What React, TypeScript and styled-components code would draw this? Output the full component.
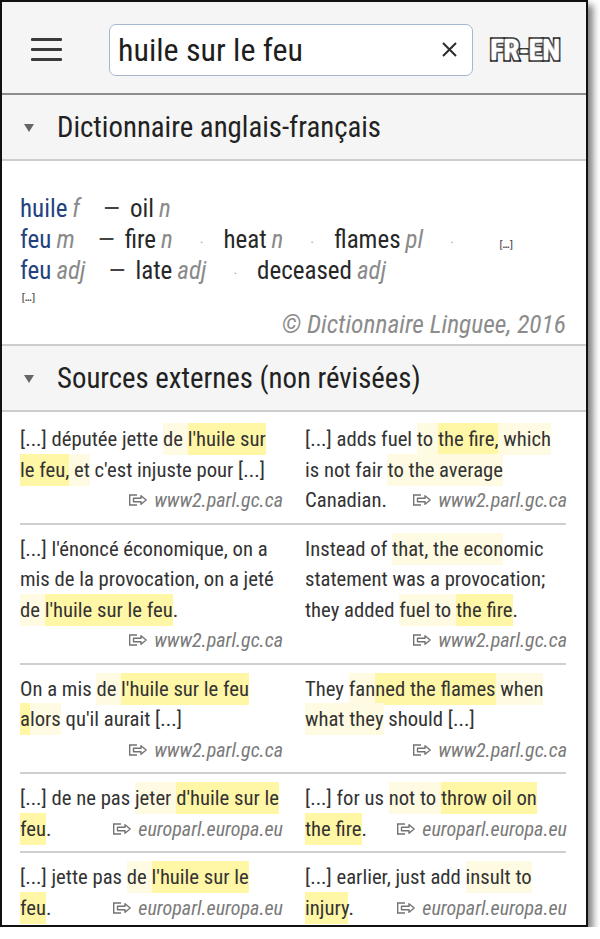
import React from "react";
import styled, { createGlobalStyle } from "styled-components";

const GlobalStyle = createGlobalStyle`
  html, body { margin: 0; padding: 0; background: #fff; }
  body { font-family: "Roboto Condensed", Roboto, "Liberation Sans", sans-serif; color: #333; }
`;

const Frame = styled.div`
  width: 588px;
  height: 927px;
  box-sizing: border-box;
  border: 2px solid #111;
  box-shadow: 5px 5px 7px rgba(0, 0, 0, 0.5);
  overflow: hidden;
  background: #fff;
  display: flex;
  flex-direction: column;
`;

const Header = styled.header`
  height: 91px;
  flex: none;
  background: #f5f5f5;
  border-bottom: 2px solid #8d8d8d;
  box-shadow: 0 1px 2px rgba(0, 0, 0, 0.15);
  display: flex;
  align-items: center;
  padding: 0 0 0 29px;
`;

const Burger = styled.div`
  width: 31px;
  display: flex;
  flex-direction: column;
  gap: 7px;
  margin-right: 47px;
  margin-top: 3px;
  span {
    display: block;
    height: 3px;
    background: #3a3a3a;
    border-radius: 1px;
  }
`;

const SearchBox = styled.div`
  width: 364px;
  height: 52px;
  box-sizing: border-box;
  border: 1.5px solid #a4b8cf;
  border-radius: 7px;
  background: #fff;
  display: flex;
  align-items: center;
  padding: 0 14px 0 8px;
  margin-top: 4px;
`;

const SearchText = styled.span`
  flex: 1;
  font-size: 32px;
  color: #1e1e1e;
  font-family: "Roboto Condensed", Roboto, sans-serif;
`;

const LangLogo = styled.span`
  margin-left: 17px;
  margin-top: 4px;
  font-family: "Roboto Condensed", "Liberation Sans", sans-serif;
  font-weight: 700;
  font-size: 29.5px;
  letter-spacing: -0.8px;
  color: #fff;
  -webkit-text-stroke: 3.5px #111;
  paint-order: stroke fill;
  text-shadow: 0 0 3px #fff;
`;

const SectionHead = styled.div<{ $top?: boolean }>`
  height: 64px;
  flex: none;
  background: #f5f5f5;
  border-bottom: 2px solid #cdcdcd;
  border-top: ${(p) => (p.$top ? "2px solid #cdcdcd" : "none")};
  display: flex;
  align-items: center;
  padding-left: 22px;
  font-size: 28.8px;
  color: #222;
`;

const Caret = styled.span`
  width: 0;
  height: 0;
  border-left: 5px solid transparent;
  border-right: 5px solid transparent;
  border-top: 8px solid #666;
  margin-right: 23px;
  margin-top: 2px;
`;

const DictBody = styled.div`
  padding: 32px 20px 4px 18px;
  height: 183px;
  box-sizing: border-box;
  flex: none;
`;

const DictLine = styled.div`
  display: flex;
  align-items: baseline;
  height: 31px;
  line-height: 31px;
  font-size: 25px;
  white-space: nowrap;
`;

const Headword = styled.span`
  color: #23427e;
  margin-right: 23px;
`;

const Tag = styled.i`
  color: #8a8a8a;
  margin-left: 5px;
`;

const Dash = styled.span`
  color: #444;
  margin-right: 10px;
`;

const Trans = styled.span`
  color: #282828;
`;

const Dot = styled.span`
  color: #a8a8a8;
  font-size: 15px;
  margin: 0 20px 0 27px;
`;

const More = styled.span<{ $left?: number }>`
  font-family: "DejaVu Sans Mono", monospace;
  font-size: 11px;
  color: #444;
  margin-left: ${(p) => p.$left ?? 0}px;
  letter-spacing: -1.5px;
`;

const MoreLine = styled.div`
  height: 20px;
  line-height: 20px;
`;

const Copy = styled.div`
  text-align: right;
  font-style: italic;
  font-size: 25.5px;
  color: #8c8c8c;
  line-height: 30px;
  margin-top: 3px;
`;

const Rows = styled.div`
  padding: 3px 20px 0 18px;
`;

const Row = styled.div<{ $last?: boolean }>`
  display: grid;
  grid-template-columns: 263px 262px;
  column-gap: 22px;
  padding: 9px 0 7px;
  border-bottom: ${(p) => (p.$last ? "none" : "2px solid #cfcfcf")};
`;

const Col = styled.div`
  font-size: 20.7px;
  line-height: 30.5px;
  color: #333;
`;

const Mark = styled.span<{ $k: "p" | "s" }>`
  background: ${(p) => (p.$k === "s" ? "#fff6a6" : "#fffbe3")};
  padding: 4px 0;
`;

const Source = styled.span`
  float: right;
  display: inline-flex;
  align-items: center;
  gap: 6px;
  font-style: italic;
  font-size: 20px;
  color: #7a7a7a;
  height: 30.5px;
  line-height: 30.5px;
  margin-left: 8px;
`;

type Seg = [string, "n" | "p" | "s"];

const SrcIcon = () => (
  <svg width="20" height="14" viewBox="0 0 20 14" fill="none" stroke="#737373" strokeWidth="1.4">
    <path d="M9 2H1.7v10H9" />
    <path d="M5.5 5.3h7.5V2.8l5.2 4.2-5.2 4.2V8.7H5.5z" strokeLinejoin="round" />
  </svg>
);

const Text = ({ segs, src }: { segs: Seg[]; src: string }) => (
  <Col>
    {segs.map(([t, k], i) =>
      k === "n" ? (
        <React.Fragment key={i}>{t}</React.Fragment>
      ) : (
        <Mark key={i} $k={k}>
          {t}
        </Mark>
      )
    )}
    <Source>
      <SrcIcon />
      {src}
    </Source>
  </Col>
);

const P = "www2.parl.gc.ca";
const E = "europarl.europa.eu";

const data: { l: Seg[]; r: Seg[]; src: string }[] = [
  {
    l: [
      ["[...] députée jette ", "n"],
      ["de ", "p"],
      ["l'huile sur le feu,", "s"],
      [" et", "p"],
      [" c'est injuste pour [...]", "n"],
    ],
    r: [
      ["[...] adds fuel ", "n"],
      ["to ", "p"],
      ["the fire,", "s"],
      [" which", "p"],
      [" is not fair ", "n"],
      ["to the average", "p"],
      [" Canadian.", "n"],
    ],
    src: P,
  },
  {
    l: [
      ["[...] l'énoncé économique, on a mis de la provocation, on a jeté ", "n"],
      ["de ", "p"],
      ["l'huile sur le feu", "s"],
      [".", "n"],
    ],
    r: [
      ["Instead of ", "n"],
      ["that, the econ", "p"],
      ["omic statement was a provocation; they added ", "n"],
      ["fuel to ", "p"],
      ["the fire", "s"],
      [".", "n"],
    ],
    src: P,
  },
  {
    l: [
      ["On a mis ", "n"],
      ["de ", "p"],
      ["l'huile sur le feu", "s"],
      [" ", "n"],
      ["a", "s"],
      ["lors", "p"],
      [" qu'il aurait [...]", "n"],
    ],
    r: [
      ["They ", "n"],
      ["fan", "p"],
      ["ned the flames", "s"],
      [" when", "p"],
      [" ", "n"],
      ["what they", "p"],
      [" should [...]", "n"],
    ],
    src: P,
  },
  {
    l: [
      ["[...] de ne pas ", "n"],
      ["jeter ", "p"],
      ["d'huile sur le feu", "s"],
      [".", "n"],
    ],
    r: [
      ["[...] for us ", "n"],
      ["not to ", "p"],
      ["throw oil on the fire", "s"],
      [".", "n"],
    ],
    src: E,
  },
  {
    l: [
      ["[...] jette pas ", "n"],
      ["de ", "p"],
      ["l'huile sur le feu", "s"],
      [".", "n"],
    ],
    r: [
      ["[...] earlier, just add ", "n"],
      ["insult to", "p"],
      [" ", "n"],
      ["injury", "s"],
      [".", "n"],
    ],
    src: E,
  },
];

export default function App() {
  return (
    <>
      <GlobalStyle />
      <Frame>
        <Header>
          <Burger>
            <span />
            <span />
            <span />
          </Burger>
          <SearchBox>
            <SearchText>huile sur le feu</SearchText>
            <svg width="17" height="17" viewBox="0 0 17 17" stroke="#2b2b2b" strokeWidth="2">
              <path d="M2 2l13 13M15 2L2 15" />
            </svg>
          </SearchBox>
          <LangLogo>FR-EN</LangLogo>
        </Header>

        <SectionHead>
          <Caret />
          Dictionnaire anglais-français
        </SectionHead>

        <DictBody>
          <DictLine>
            <Headword>
              huile<Tag>f</Tag>
            </Headword>
            <Dash>—</Dash>
            <Trans>
              oil<Tag>n</Tag>
            </Trans>
          </DictLine>
          <DictLine>
            <Headword>
              feu<Tag>m</Tag>
            </Headword>
            <Dash>—</Dash>
            <Trans>
              fire<Tag>n</Tag>
            </Trans>
            <Dot>·</Dot>
            <Trans>
              heat<Tag>n</Tag>
            </Trans>
            <Dot>·</Dot>
            <Trans>
              flames<Tag>pl</Tag>
            </Trans>
            <Dot>·</Dot>
            <More $left={24}>[…]</More>
          </DictLine>
          <DictLine>
            <Headword>
              feu<Tag>adj</Tag>
            </Headword>
            <Dash>—</Dash>
            <Trans>
              late<Tag>adj</Tag>
            </Trans>
            <Dot>·</Dot>
            <Trans>
              deceased<Tag>adj</Tag>
            </Trans>
          </DictLine>
          <MoreLine>
            <More>[…]</More>
          </MoreLine>
          <Copy>© Dictionnaire Linguee, 2016</Copy>
        </DictBody>

        <SectionHead $top>
          <Caret />
          Sources externes (non révisées)
        </SectionHead>

        <Rows>
          {data.map((d, i) => (
            <Row key={i} $last={i === data.length - 1}>
              <Text segs={d.l} src={d.src} />
              <Text segs={d.r} src={d.src} />
            </Row>
          ))}
        </Rows>
      </Frame>
    </>
  );
}
